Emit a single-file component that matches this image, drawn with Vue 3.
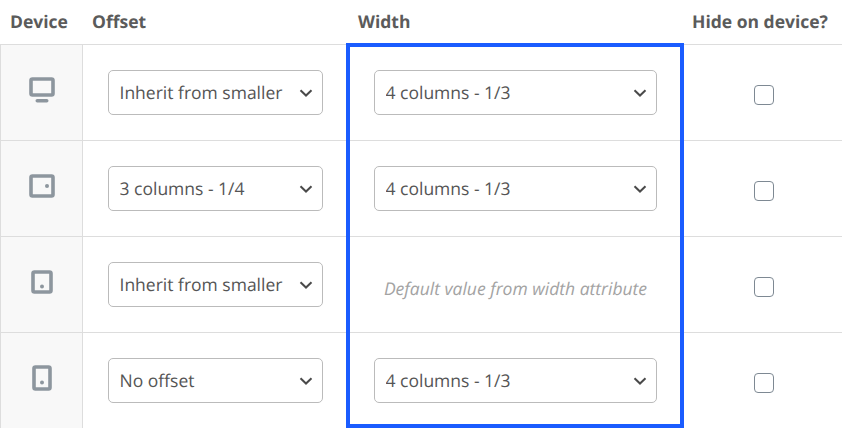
<template>
  <div class="table">
    <div class="head">
      <div class="th">Device</div>
      <div class="th">Offset</div>
      <div class="th">Width</div>
      <div class="th">Hide on device?</div>
    </div>
    <div v-for="row in rows" :key="row.device" class="row">
      <div class="device">
        <svg :width="row.icon.w" :height="row.icon.h" :viewBox="`0 0 ${row.icon.w} ${row.icon.h}`" fill="none">
          <rect x="2" y="2" :width="row.icon.w - 4" :height="row.icon.rectH" rx="1.5" stroke="#8d969e" stroke-width="3.6" />
          <rect v-if="row.device === 'desktop'" x="6.5" y="22" width="13" height="3.5" rx="1.75" fill="#8d969e" />
          <circle v-else :cx="row.icon.dotX" :cy="row.icon.dotY" r="2" fill="#8d969e" />
        </svg>
      </div>
      <div class="offset">
        <div class="select">
          <select v-model="row.offset">
            <option v-for="o in offsetOptions" :key="o">{{ o }}</option>
          </select>
          <svg class="chevron" width="14" height="8" viewBox="0 0 14 8" fill="none">
            <path d="M1.5 1.2 7 6.5l5.5-5.3" stroke="#4a4a4a" stroke-width="2" />
          </svg>
        </div>
      </div>
      <div class="width">
        <div v-if="row.width" class="select">
          <select v-model="row.width">
            <option v-for="o in widthOptions" :key="o">{{ o }}</option>
          </select>
          <svg class="chevron" width="14" height="8" viewBox="0 0 14 8" fill="none">
            <path d="M1.5 1.2 7 6.5l5.5-5.3" stroke="#4a4a4a" stroke-width="2" />
          </svg>
        </div>
        <em v-else class="placeholder">Default value from width attribute</em>
      </div>
      <div class="hide">
        <input type="checkbox" v-model="row.hidden" />
      </div>
    </div>
    <div class="highlight"></div>
  </div>
</template>

<script setup>
import { reactive } from 'vue'

const offsetOptions = ['No offset', 'Inherit from smaller', '3 columns - 1/4']
const widthOptions = ['4 columns - 1/3', '6 columns - 1/2', '12 columns - 1/1']

const rows = reactive([
  { device: 'desktop', icon: { w: 26, h: 26, rectH: 16 }, offset: 'Inherit from smaller', width: '4 columns - 1/3', hidden: false },
  { device: 'tablet-landscape', icon: { w: 26, h: 24, rectH: 20, dotX: 18, dotY: 12 }, offset: '3 columns - 1/4', width: '4 columns - 1/3', hidden: false },
  { device: 'tablet', icon: { w: 22, h: 24, rectH: 20, dotX: 11, dotY: 16.5 }, offset: 'Inherit from smaller', width: null, hidden: false },
  { device: 'mobile', icon: { w: 20, h: 26, rectH: 22, dotX: 10, dotY: 17.5 }, offset: 'No offset', width: '4 columns - 1/3', hidden: false },
])
</script>

<style scoped>
.table {
  position: relative;
  width: 842px;
  font-family: "Open Sans", sans-serif;
  color: #555;
  text-rendering: geometricPrecision;
}

.head,
.row {
  display: grid;
  grid-template-columns: 83px 264px 336px 159px;
}

.head {
  height: 45px;
  border-bottom: 1px solid #ddd;
  box-sizing: border-box;
}

.th {
  padding: 11px 0 0 9px;
  font-size: 17.5px;
  line-height: 22px;
  font-weight: 700;
  color: #5b5b5b;
  white-space: nowrap;
}

.th:first-child {
  padding-left: 10px;
}

.th:nth-child(3) {
  padding-left: 11px;
}

.row {
  height: 96px;
  box-sizing: border-box;
  border-bottom: 1px solid #ddd;
}

.row:last-of-type {
  border-bottom: none;
}

.device {
  display: flex;
  align-items: center;
  justify-content: center;
  padding-bottom: 5px;
  background: #f8f8f8;
  border-left: 1px solid #ddd;
  border-right: 1px solid #ddd;
}

.offset,
.width,
.hide {
  display: flex;
  align-items: center;
}

.offset {
  padding: 0 24px 0 25px;
}

.width {
  padding: 0 26px 0 27px;
}

.hide {
  justify-content: center;
  padding: 5px 0 0 3px;
}

.select {
  position: relative;
  flex: 1;
  height: 45px;
}

.select select {
  width: 100%;
  height: 100%;
  padding: 0 30px 0 10.5px;
  appearance: none;
  background: #fff;
  border: 1px solid #bbb;
  border-radius: 5px;
  font-family: inherit;
  font-size: 17.5px;
  color: #555;
  text-rendering: geometricPrecision;
}

.chevron {
  position: absolute;
  right: 10px;
  top: 19px;
  pointer-events: none;
}

.placeholder {
  flex: 1;
  padding-top: 8px;
  font-size: 17.5px;
  color: #a3a3a3;
  text-align: center;
  white-space: nowrap;
}

.hide input {
  width: 20px;
  height: 20px;
  margin: 0;
  appearance: none;
  background: #fff;
  border: 1px solid #7e8993;
  border-radius: 4px;
}

.highlight {
  position: absolute;
  left: 346px;
  top: 43px;
  width: 338px;
  height: 385px;
  box-sizing: border-box;
  border: 4px solid #1a5cff;
  pointer-events: none;
}
</style>

<style>
body {
  overflow: hidden;
  background: #fff;
}
</style>
